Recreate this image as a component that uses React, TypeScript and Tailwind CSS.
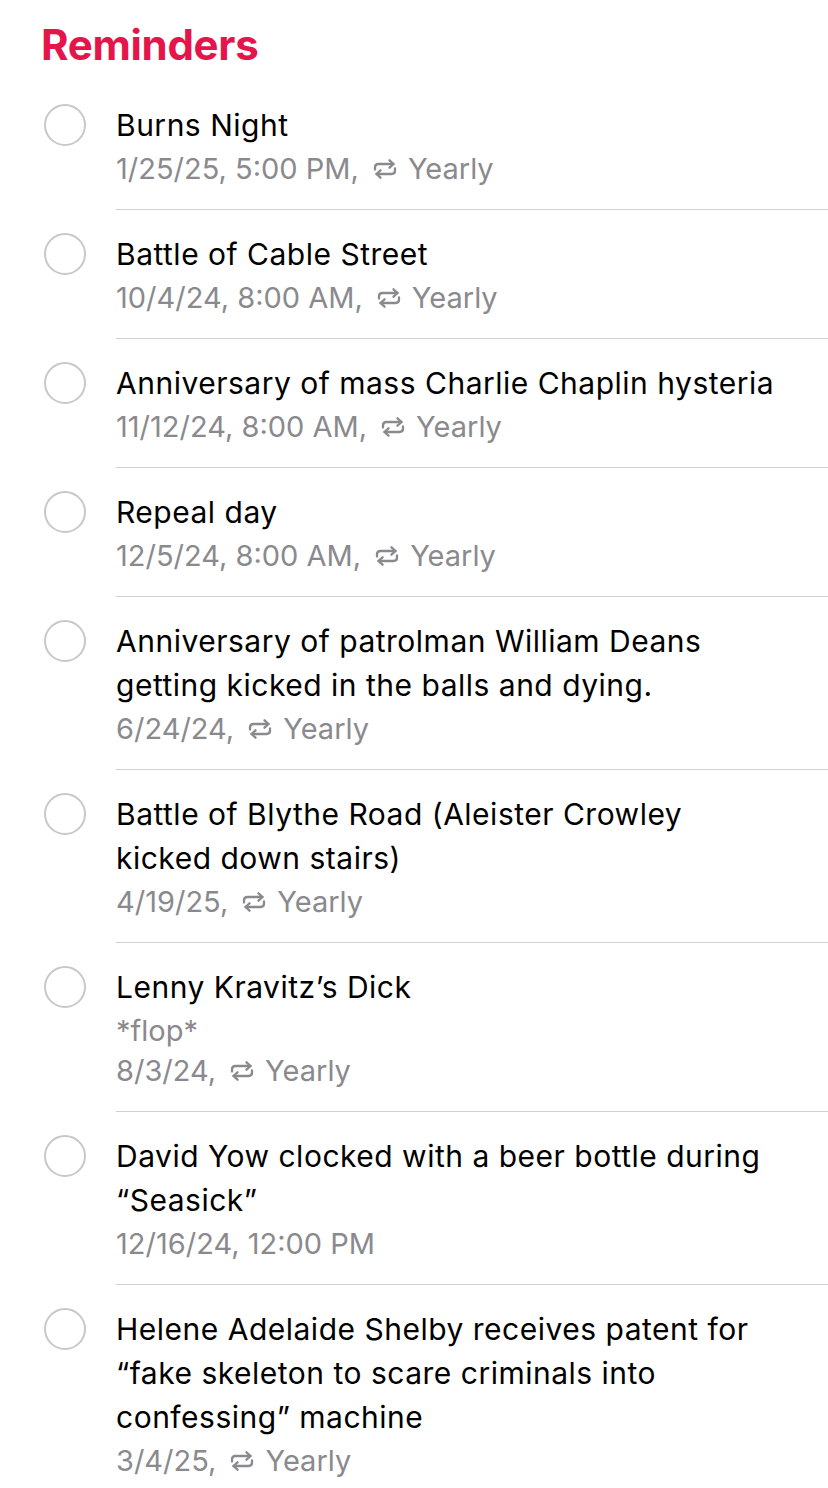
import React from 'react';

type Reminder = {
    lines: string[];
    note?: string;
    date: string;
    yearly?: boolean;
};

const reminders: Reminder[] = [
    { lines: ["Burns Night"], date: "1/25/25, 5:00 PM,", yearly: true },
    { lines: ["Battle of Cable Street"], date: "10/4/24, 8:00 AM,", yearly: true },
    { lines: ["Anniversary of mass Charlie Chaplin hysteria"], date: "11/12/24, 8:00 AM,", yearly: true },
    { lines: ["Repeal day"], date: "12/5/24, 8:00 AM,", yearly: true },
    { lines: ["Anniversary of patrolman William Deans", "getting kicked in the balls and dying."], date: "6/24/24,", yearly: true },
    { lines: ["Battle of Blythe Road (Aleister Crowley", "kicked down stairs)"], date: "4/19/25,", yearly: true },
    { lines: ["Lenny Kravitz\u2019s Dick"], note: "*flop*", date: "8/3/24,", yearly: true },
    { lines: ["David Yow clocked with a beer bottle during", "\u201CSeasick\u201D"], date: "12/16/24, 12:00 PM" },
    {
        lines: ["Helene Adelaide Shelby receives patent for", "\u201Cfake skeleton to scare criminals into", "confessing\u201D machine"],
        date: "3/4/25,",
        yearly: true,
    },
];

// repeat arrows glyph next to "Yearly"
const RepeatIcon = () => (
    <svg width="26" height="20" viewBox="0 0 26 20" fill="none" stroke="currentColor" strokeWidth="2.3" strokeLinecap="round" strokeLinejoin="round" className="shrink-0">
        <path d="M3 10.5 V8.5 Q3 5 6.5 5 H21.5" />
        <path d="M17.5 1.3 L21.5 5 L17.5 8.7" />
        <path d="M23 9.5 V11.5 Q23 15 19.5 15 H4.5" />
        <path d="M8.5 11.3 L4.5 15 L8.5 18.7" />
    </svg>
);

const App: React.FC = () => {
    return (
        <div className="w-[828px] min-h-[1488px] bg-white font-['Inter',sans-serif] overflow-hidden">
            <h1 className="pl-[41px] pt-[20px] h-[81px] text-[42px] leading-[50px] font-bold text-[#e5154b] tracking-[-0.3px]">
                Reminders
            </h1>

            <div>
                {reminders.map((r, i) => (
                    <div key={i} className="flex">
                        {/* checkbox circle */}
                        <div className="w-[116px] shrink-0 pt-[22px] pl-[44px]">
                            <div className="w-[42px] h-[42px] mt-[1px] rounded-full border-[2.5px] border-[#c8c8c8]" />
                        </div>
                        <div className={`flex-1 pt-[22px] pb-[18px] ${i < reminders.length - 1 ? 'border-b border-[#d1d1d4]' : ''}`}>
                            {r.lines.map((l, j) => (
                                <div key={j} className="text-[30px] leading-[44px] text-black tracking-[0.5px] whitespace-nowrap">
                                    {l}
                                </div>
                            ))}
                            {r.note && (
                                <div className="text-[29px] leading-[44px] -mb-[4px] text-[#8a8a8e]">{r.note}</div>
                            )}
                            <div className="flex items-center gap-[13px] text-[29px] leading-[44px] text-[#8a8a8e] whitespace-nowrap">
                                <span>{r.date}</span>
                                {r.yearly && (
                                    <span className="flex items-center gap-[10px]">
                                        <RepeatIcon />
                                        Yearly
                                    </span>
                                )}
                            </div>
                        </div>
                    </div>
                ))}
            </div>
        </div>
    );
};

export default App;
